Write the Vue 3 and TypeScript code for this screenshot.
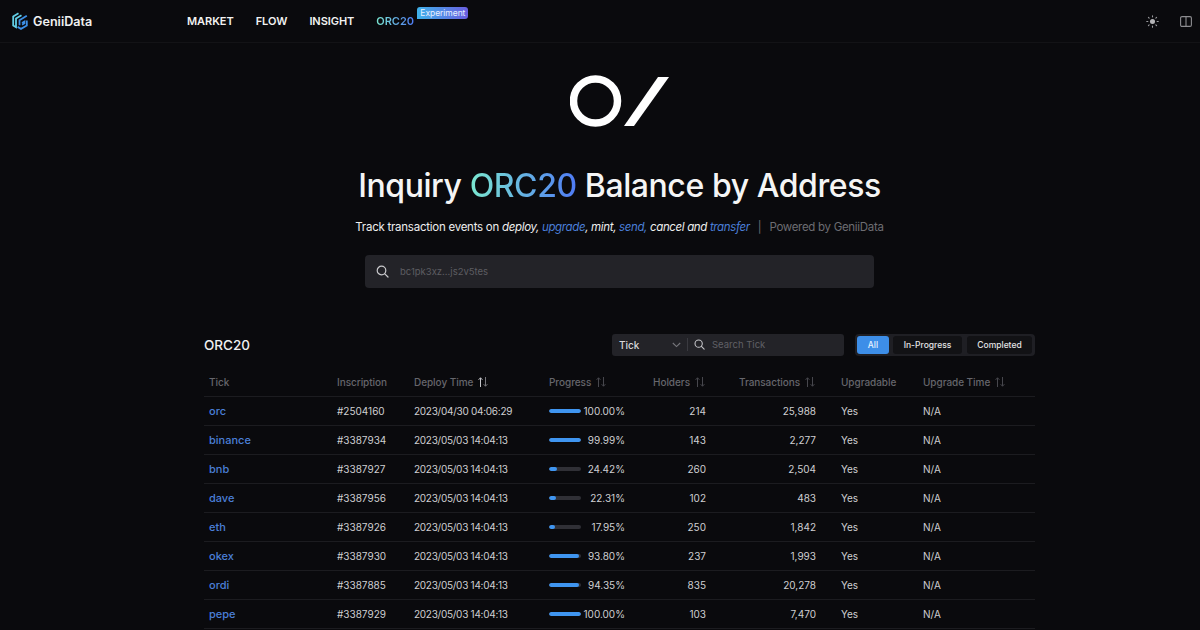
<script setup lang="ts">
interface Row {
  tick: string;
  inscription: string;
  deployTime: string;
  progress: number;
  holders: string;
  transactions: string;
}

const rows: Row[] = [
  { tick: "orc", inscription: "#2504160", deployTime: "2023/04/30 04:06:29", progress: 100, holders: "214", transactions: "25,988" },
  { tick: "binance", inscription: "#3387934", deployTime: "2023/05/03 14:04:13", progress: 99.99, holders: "143", transactions: "2,277" },
  { tick: "bnb", inscription: "#3387927", deployTime: "2023/05/03 14:04:13", progress: 24.42, holders: "260", transactions: "2,504" },
  { tick: "dave", inscription: "#3387956", deployTime: "2023/05/03 14:04:13", progress: 22.31, holders: "102", transactions: "483" },
  { tick: "eth", inscription: "#3387926", deployTime: "2023/05/03 14:04:13", progress: 17.95, holders: "250", transactions: "1,842" },
  { tick: "okex", inscription: "#3387930", deployTime: "2023/05/03 14:04:13", progress: 93.8, holders: "237", transactions: "1,993" },
  { tick: "ordi", inscription: "#3387885", deployTime: "2023/05/03 14:04:13", progress: 94.35, holders: "835", transactions: "20,278" },
  { tick: "pepe", inscription: "#3387929", deployTime: "2023/05/03 14:04:13", progress: 100, holders: "103", transactions: "7,470" },
];

const navItems = ["MARKET", "FLOW", "INSIGHT"];
</script>

<template>
  <div class="page">
    <header class="topbar">
      <div class="brand">
        <svg width="16" height="18" viewBox="0 0 16 18" fill="none" stroke-width="1.8">
          <path d="M6.5 1.2 1.2 4.4v9L4 15.2V6.6L9.5 3.2" stroke="#62cfe6" />
          <path d="M14.8 3.8 7.5 8.2v5M14.8 8.5v5L9 16.9l-3.4-2M10 12.6l2.4-1.4V9.6L10 11" stroke="#3d8fe6" />
        </svg>
        <span class="brand-name">GeniiData</span>
      </div>
      <nav class="nav">
        <a v-for="item in navItems" :key="item" class="nav-link">{{ item }}</a>
        <a class="nav-link orc">ORC20<span class="tag">Experiment</span></a>
      </nav>
      <div class="top-actions">
        <svg width="13" height="13" viewBox="0 0 14 14" fill="#b5b5b8" stroke="#9a9a9e" stroke-width="1.2" stroke-linecap="round">
          <circle cx="7" cy="7" r="2.7" stroke="none" />
          <path d="M7 .8v1.2M7 12v1.2M.8 7H2M12 7h1.2M2.6 2.6l.8.8M10.6 10.6l.8.8M2.6 11.4l.8-.8M10.6 3.4l.8-.8" />
        </svg>
        <svg width="12" height="11" viewBox="0 0 12 11" fill="none" stroke="#8d8d91" stroke-width="1.1">
          <rect x=".6" y=".6" width="10.8" height="9.8" rx="1.4" />
          <path d="M6 .6v9.8" />
        </svg>
      </div>
    </header>

    <main class="main">
      <section class="hero">
        <svg class="hero-logo" width="100" height="52" viewBox="0 0 100 52" fill="none">
          <circle cx="25.5" cy="26" r="22" stroke="#fff" stroke-width="7.5" />
          <path d="M88 2h11L64 51H54z" fill="#fff" />
        </svg>
        <h1 class="title">Inquiry <span class="gradient">ORC20</span> Balance by Address</h1>
        <p class="subtitle">
          Track transaction events on <em>deploy, <b>upgrade</b>, mint, <b>send,</b> cancel and <b>transfer</b></em>
          <span class="sep">|</span>
          <span class="powered">Powered by GeniiData</span>
        </p>
        <div class="address-search">
          <svg width="13" height="13" viewBox="0 0 13 13" fill="none" stroke="#c9c9cc" stroke-width="1.2" stroke-linecap="round">
            <circle cx="5.5" cy="5.5" r="4.3" />
            <path d="m8.8 8.8 3.2 3.2" />
          </svg>
          <span class="placeholder">bc1pk3xz...js2v5tes</span>
        </div>
      </section>

      <section class="list">
        <div class="list-head">
          <h2 class="list-title">ORC20</h2>
          <div class="tick-search">
            <span class="select-label">Tick</span>
            <svg class="chevron" width="9" height="6" viewBox="0 0 9 6" fill="none" stroke="#77777c" stroke-width="1.1">
              <path d="m.8 1 3.7 3.6L8.2 1" />
            </svg>
            <span class="divider"></span>
            <svg width="11" height="11" viewBox="0 0 13 13" fill="none" stroke="#c4c4c8" stroke-width="1.3" stroke-linecap="round">
              <circle cx="5.5" cy="5.5" r="4.3" />
              <path d="m8.8 8.8 3.2 3.2" />
            </svg>
            <span class="tick-placeholder">Search Tick</span>
          </div>
          <div class="segments">
            <span class="segment active">All</span>
            <span class="segment progress-tab">In-Progress</span>
            <span class="segment completed-tab">Completed</span>
          </div>
        </div>

        <table class="table">
          <colgroup>
            <col style="width: 128px" />
            <col style="width: 77px" />
            <col style="width: 135px" />
            <col style="width: 104px" />
            <col style="width: 86px" />
            <col style="width: 102px" />
            <col style="width: 82px" />
            <col />
          </colgroup>
          <thead>
            <tr>
              <th>Tick</th>
              <th>Inscription</th>
              <th>
                Deploy Time
                <svg class="sort" width="10" height="10" viewBox="0 0 10 10" fill="none" stroke-width="1">
                  <path d="M2.5 10V.8M.6 2.8l1.9-2 1.9 2" stroke="#c4c4c8" />
                  <path d="M7.5 0v9.2M5.6 7.2l1.9 2 1.9-2" stroke="#77777c" />
                </svg>
              </th>
              <th>
                Progress
                <svg class="sort" width="10" height="10" viewBox="0 0 10 10" fill="none" stroke="#47474d" stroke-width="1">
                  <path d="M2.5 10V.8M.6 2.8l1.9-2 1.9 2M7.5 0v9.2M5.6 7.2l1.9 2 1.9-2" />
                </svg>
              </th>
              <th>
                Holders
                <svg class="sort" width="10" height="10" viewBox="0 0 10 10" fill="none" stroke="#47474d" stroke-width="1">
                  <path d="M2.5 10V.8M.6 2.8l1.9-2 1.9 2M7.5 0v9.2M5.6 7.2l1.9 2 1.9-2" />
                </svg>
              </th>
              <th>
                Transactions
                <svg class="sort" width="10" height="10" viewBox="0 0 10 10" fill="none" stroke="#47474d" stroke-width="1">
                  <path d="M2.5 10V.8M.6 2.8l1.9-2 1.9 2M7.5 0v9.2M5.6 7.2l1.9 2 1.9-2" />
                </svg>
              </th>
              <th>Upgradable</th>
              <th>
                Upgrade Time
                <svg class="sort" width="10" height="10" viewBox="0 0 10 10" fill="none" stroke="#47474d" stroke-width="1">
                  <path d="M2.5 10V.8M.6 2.8l1.9-2 1.9 2M7.5 0v9.2M5.6 7.2l1.9 2 1.9-2" />
                </svg>
              </th>
            </tr>
          </thead>
          <tbody>
            <tr v-for="row in rows" :key="row.tick">
              <td class="tick">{{ row.tick }}</td>
              <td>{{ row.inscription }}</td>
              <td class="date">{{ row.deployTime }}</td>
              <td>
                <div class="progress">
                  <div class="track"><div class="fill" :style="{ width: row.progress + '%' }"></div></div>
                  <span class="percent">{{ row.progress.toFixed(2) }}%</span>
                </div>
              </td>
              <td class="num holders">{{ row.holders }}</td>
              <td class="num transactions">{{ row.transactions }}</td>
              <td>Yes</td>
              <td>N/A</td>
            </tr>
          </tbody>
        </table>
      </section>
    </main>
  </div>
</template>

<style scoped>
.page {
  height: 630px;
  overflow: hidden;
  background: #0a0a0d;
  color: #fff;
  font-family: Inter, "Liberation Sans", sans-serif;
}

.topbar {
  display: flex;
  align-items: center;
  height: 42px;
  padding: 0 8px 0 12px;
  border-bottom: 1px solid #131316;
}

.brand {
  display: flex;
  align-items: center;
  gap: 5px;
  width: 175px;
}

.brand-name {
  font-size: 12.6px;
  font-weight: 600;
  color: #f0f0f0;
}

.nav {
  display: flex;
  gap: 22px;
  font-size: 11px;
  font-weight: 600;
  letter-spacing: -0.05px;
  color: #f2f2f2;
}

.nav-link {
  position: relative;
}

.nav-link.orc {
  background: linear-gradient(90deg, #7be8d0, #4f7bf5);
  -webkit-background-clip: text;
  background-clip: text;
  color: transparent;
}

.tag {
  position: absolute;
  left: 41px;
  top: -7px;
  padding: 0 3px;
  border-radius: 3px 3px 3px 0;
  background: linear-gradient(90deg, #3fb2ea, #6a5fe0);
  color: #e8f0ff;
  font-size: 8.5px;
  font-weight: 400;
  line-height: 12px;
  white-space: nowrap;
}

.top-actions {
  display: flex;
  align-items: center;
  gap: 21px;
  margin-left: auto;
}

.main {
  padding-left: 39px;
}

.hero {
  display: flex;
  flex-direction: column;
  align-items: center;
  padding-top: 32px;
}

.hero-logo {
  display: block;
}

.title {
  margin: 39px 0 0;
  font-size: 32px;
  line-height: 40px;
  font-weight: 500;
  letter-spacing: -0.42px;
  color: #f5f5f5;
}

.gradient {
  background: linear-gradient(90deg, #7be8d0, #4f7bf5);
  -webkit-background-clip: text;
  background-clip: text;
  color: transparent;
}

.subtitle {
  margin: 13px 0 0;
  font-size: 11.5px;
  line-height: 16px;
  letter-spacing: -0.25px;
  color: #eeeeee;
}

.subtitle em {
  letter-spacing: -0.35px;
}

.subtitle em b {
  font-weight: 400;
  color: #4a7fd8;
}

.sep {
  margin: 0 8px;
  color: #6d6d72;
}

.powered {
  letter-spacing: -0.3px;
  color: #6d6d72;
}

.address-search {
  display: flex;
  align-items: center;
  gap: 11px;
  box-sizing: border-box;
  width: 509px;
  height: 33px;
  margin-top: 20px;
  padding-left: 11px;
  border-radius: 4px;
  background: #232328;
}

.placeholder {
  font-size: 9.5px;
  color: #5d5d62;
}

.list {
  width: 831px;
  margin: 45px auto 0;
}

.list-head {
  display: flex;
  align-items: center;
  height: 23px;
}

.list-title {
  margin: 0 auto 0 0;
  font-size: 13.5px;
  font-weight: 500;
  color: #f0f0f0;
}

.tick-search {
  display: flex;
  align-items: center;
  box-sizing: border-box;
  width: 232px;
  height: 22px;
  padding-left: 7px;
  border-radius: 3px;
  background: #232328;
}

.select-label {
  width: 53px;
  font-size: 10px;
  font-weight: 500;
  color: #d8d8da;
}

.chevron {
  margin-right: 6px;
}

.divider {
  width: 1px;
  height: 13px;
  margin-right: 6px;
  background: #3a3a40;
}

.tick-placeholder {
  margin-left: 7px;
  font-size: 9.5px;
  color: #606066;
}

.segments {
  display: flex;
  box-sizing: border-box;
  height: 22px;
  margin-left: 11px;
  padding: 2px 3px 2px 2px;
  border-radius: 4px;
  background: #1f1f24;
}

.segment {
  display: flex;
  align-items: center;
  justify-content: center;
  border-radius: 3px;
  background: #121215;
  color: #e4e4e6;
  font-size: 8.5px;
  font-weight: 500;
}

.segment.active {
  width: 32px;
  background: #3d8ee8;
  color: #e8f2ff;
}

.progress-tab {
  width: 69px;
  margin-left: 4px;
}

.completed-tab {
  width: 65px;
  margin-left: 5px;
}

.table {
  width: 100%;
  margin-top: 12px;
  border-collapse: collapse;
  table-layout: fixed;
  font-size: 10px;
}

th,
td {
  padding: 0 5px;
  border-bottom: 1px solid #1c1c20;
  white-space: nowrap;
  overflow: hidden;
}

th {
  height: 28px;
  text-align: left;
  font-weight: 500;
  letter-spacing: -0.05px;
  color: #66666c;
}

td {
  height: 28px;
  color: #cfcfd2;
}

.tick {
  font-size: 11px;
  font-weight: 500;
  color: #4a7fd8;
}

.date {
  letter-spacing: -0.27px;
}

.sort {
  margin-left: 2px;
  vertical-align: -1px;
}

.progress {
  display: flex;
  align-items: center;
  justify-content: space-between;
  width: 76px;
}

.track {
  width: 32px;
  height: 4px;
  border-radius: 2px;
  background: #303036;
  overflow: hidden;
}

.fill {
  height: 100%;
  border-radius: 2px;
  background: #3f95f0;
}

.num {
  text-align: right;
}

.holders {
  padding-right: 28px;
}

.transactions {
  padding-right: 20px;
}
</style>

<style>
body {
  background: #0a0a0d;
}
</style>
